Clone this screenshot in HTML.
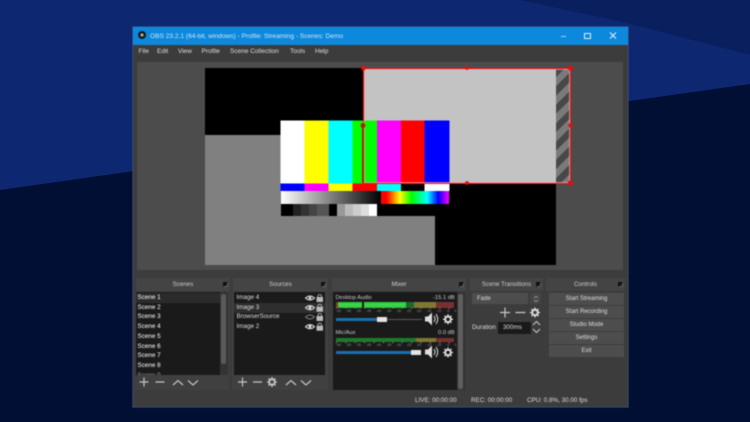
<!DOCTYPE html>
<html><head><meta charset="utf-8"><style>
html,body{margin:0;padding:0;width:750px;height:422px;overflow:hidden;background:#000f33}
*{box-sizing:border-box}
.a{position:absolute}
#bg{position:absolute;left:0;top:0}
#w{position:absolute;left:0;top:0;width:750px;height:422px;filter:blur(.45px);font-family:"Liberation Sans",sans-serif;font-size:6.5px;color:#ddd}
.t{position:absolute;white-space:nowrap;line-height:9px}
.dock{position:absolute;top:278px;height:13px;background:#444;text-align:center;line-height:13px;font-size:6.200px;color:#ccc}
.dock:after{content:"";position:absolute;right:2px;top:4px;width:5px;height:5px;background:#111;border-radius:1px;box-shadow:inset 1px 1px 0 #111,inset -1px -1px 0 #666}
.p{position:absolute;background:#404040}
.list{position:absolute;background:#1a1a1a}
.btn{position:absolute;left:549px;width:75px;height:12px;background:#4d4d4d;text-align:center;line-height:12px;font-size:6px;color:#ddd}
.s{position:absolute;left:137.5px;font-size:6.300px;line-height:9.7px;color:#ddd;white-space:nowrap}
</style></head><body>
<svg id="bg" width="750" height="422">
<rect width="750" height="422" fill="#000f33"/>
<polygon points="0,0 750,0 750,84 0,190" fill="#0e2771"/>
<polygon points="520,0 750,0 750,55 627,23" fill="#0a1f5e"/>
</svg>
<div id="w">
<div class="a" style="left:133px;top:27px;width:495px;height:380px;background:#3c3c3c;box-shadow:0 0 0 .5px #4a6a90"></div>
<div class="a" style="left:133px;top:27px;width:495px;height:18px;background:#0c88dc"></div>
<svg class="a" style="left:137px;top:30px" width="10" height="10"><circle cx="5" cy="5" r="4" fill="#1a1a1a"/><circle cx="5" cy="5" r="1.5" fill="#bbb"/></svg>
<div class="t" style="left:150px;top:32px;font-size:6.600px;color:#cfe6f8">OBS 23.2.1 (64-bit, windows) - Profile: Streaming - Scenes: Demo</div>
<div class="a" style="left:561px;top:35.5px;width:5px;height:1px;background:#9fd0f2"></div>
<div class="a" style="left:584px;top:32.5px;width:7px;height:6px;border:1px solid #e0f0fc"></div>
<svg class="a" style="left:609px;top:32px" width="8" height="7"><path d="M1 .5L7 6.5M7 .5L1 6.5" stroke="#e0f0fc" stroke-width="1.1"/></svg>
<div class="t" style="left:138.5px;top:47px">File</div>
<div class="t" style="left:157px;top:47px">Edit</div>
<div class="t" style="left:178px;top:47px">View</div>
<div class="t" style="left:201.5px;top:47px">Profile</div>
<div class="t" style="left:230px;top:47px">Scene Collection</div>
<div class="t" style="left:290px;top:47px">Tools</div>
<div class="t" style="left:315px;top:47px">Help</div>

<div class="a" style="left:137px;top:62px;width:486px;height:208px;background:#4c4c4c"></div>
<div class="a" style="left:205px;top:68px;width:158px;height:67px;background:#000"></div>
<div class="a" style="left:205px;top:135px;width:230px;height:130px;background:#808080"></div>
<div class="a" style="left:435px;top:183px;width:121px;height:82px;background:#000"></div>
<div class="a" style="left:363px;top:68px;width:193px;height:115px;background:#c3c3c3"></div>
<div class="a" style="left:556px;top:68px;width:14px;height:115px;background:repeating-linear-gradient(135deg,#484848 0 6.500px,#7a7a7a 6.500px 13px)"></div>
<div class="a" style="left:281px;top:183px;width:168px;height:33px;background:#000"></div>
<svg class="a" style="left:0;top:0" width="750" height="422" shape-rendering="crispEdges">
<rect x="280.5" y="120.5" width="24.2" height="63" fill="#fff"/>
<rect x="304.7" y="120.5" width="23.6" height="63" fill="#ff0"/>
<rect x="328.3" y="120.5" width="24.4" height="63" fill="#0ff"/>
<rect x="352.7" y="120.5" width="24.3" height="63" fill="#0f0"/>
<rect x="377" y="120.5" width="24" height="63" fill="#f0f"/>
<rect x="401" y="120.5" width="23.3" height="63" fill="#f00"/>
<rect x="424.3" y="120.5" width="25" height="63" fill="#00f"/>
<rect x="280.5" y="183.5" width="24.2" height="7.5" fill="#00f"/>
<rect x="304.7" y="183.5" width="23.6" height="7.5" fill="#f0f"/>
<rect x="328.3" y="183.5" width="24.4" height="7.5" fill="#ff0"/>
<rect x="352.7" y="183.5" width="24.3" height="7.5" fill="#f00"/>
<rect x="377" y="183.5" width="24" height="7.5" fill="#0ff"/>
<rect x="401" y="183.5" width="23.3" height="7.5" fill="#000"/>
<rect x="424.3" y="183.5" width="25" height="7.5" fill="#fff"/>
</svg>
<div class="a" style="left:280.5px;top:191px;width:100.5px;height:12.5px;background:linear-gradient(90deg,#fff,#000)"></div>
<div class="a" style="left:381px;top:191px;width:68.3px;height:12.5px;background:linear-gradient(90deg,#f00 0 8%,#ff0 28%,#0f0 45%,#0ff 68%,#00f 84%,#f0f 100%)"></div>
<div class="a" style="left:280.5px;top:203.5px;width:48px;height:12.5px;background:linear-gradient(90deg,#000 0 25%,#222 25% 42%,#333 42% 58%,#444 58% 75%,#555 75%)"></div>
<div class="a" style="left:337px;top:203.5px;width:40px;height:12.5px;background:linear-gradient(90deg,#999 0 20%,#bbb 20% 40%,#ccc 40% 60%,#ddd 60% 80%,#fff 80%)"></div>
<div class="a" style="left:362.500px;top:67.500px;width:208.500px;height:116px;border:1.500px solid #e41010;box-shadow:inset 0 0 0 .8px #ffa0a0"></div>
<div class="a" style="left:362px;top:125px;width:2px;height:58px;background:#a8200a"></div>
<svg class="a" style="left:0;top:0" width="750" height="422" fill="#dd1111">
<circle cx="363.5" cy="68" r="2.4"/><circle cx="467" cy="68" r="1.9"/><circle cx="570.5" cy="68" r="2.6"/>
<circle cx="570.5" cy="125.5" r="2.2"/><circle cx="570.5" cy="183" r="2.6"/><circle cx="467" cy="183" r="1.9"/>
<circle cx="363" cy="125.5" r="2.4" fill="#b81515"/></svg>

<div class="dock" style="left:136px;width:94px">Scenes</div>
<div class="dock" style="left:233px;width:95px">Sources</div>
<div class="dock" style="left:332px;width:134px">Mixer</div>
<div class="dock" style="left:470px;width:73px">Scene Transitions</div>
<div class="dock" style="left:546px;width:79px">Controls</div>

<div class="p" style="left:135px;top:291px;width:94px;height:99px"></div>
<div class="p" style="left:232px;top:291px;width:96px;height:99px"></div>
<div class="list" style="left:136px;top:292px;width:84px;height:82.500px"></div>
<div class="a" style="left:136px;top:293px;width:84px;height:10px;background:#2b2b2b"></div>
<div class="a" style="left:220px;top:292px;width:8px;height:83px;background:#333"></div>
<div class="a" style="left:221px;top:294px;width:5px;height:70px;background:#5a5a5a;border-radius:2px"></div>
<div class="s" style="top:293px;color:#fff">Scene 1<br>Scene 2<br>Scene 3<br>Scene 4<br>Scene 5<br>Scene 6<br>Scene 7<br>Scene 8</div>
<div class="a" style="left:137.5px;top:372px;width:80px;height:2.500px;overflow:hidden;font-size:6.300px;line-height:9px;color:#999"><div style="margin-top:-1px">Scene 9</div></div>
<svg class="a" style="left:0;top:0" width="750" height="422" fill="none" stroke="#c4c4c4" stroke-width="1.2">
<path d="M144 377.500v9M139.500 382h9M155.500 382h9M173 385l5-4.500 5 4.500M188 380.500l5 4.500 5-4.500"/>
<path d="M242.500 377.500v9M238 382h9M253 382h9M286 385l5-4.500 5 4.500M301 380.500l5 4.500 5-4.500"/>
<circle cx="272" cy="382" r="2.800" stroke-width="2"/>
<path d="M272 377v1.500M272 385.500v1.500M267 382h1.500M275.500 382h1.500M268.500 378.500l1 1M275.500 378.500l-1 1M268.500 385.500l1-1M275.500 385.500l-1-1" stroke-width="1.300"/>
</svg>

<div class="list" style="left:234px;top:292px;width:91px;height:82.500px"></div>
<div class="a" style="left:234px;top:303px;width:91px;height:9.500px;background:#2e2e2e"></div>
<div class="s" style="left:236.500px;top:293px;color:#ddd">Image 4<br>Image 3<br>BrowserSource<br>Image 2</div>
<svg class="a" style="left:0;top:0" width="750" height="422">
<g fill="none" stroke="#e0e0e0" stroke-width="1">
<path d="M305.500 298q4.500-4 9 0q-4.500 4-9 0z"/><path d="M305.500 307.700q4.500-4 9 0q-4.500 4-9 0z"/><path d="M305.500 317q4.500-4 9 0q-4.500 4-9 0z" stroke="#777"/><path d="M305.500 326.700q4.500-4 9 0q-4.500 4-9 0z"/></g>
<g fill="#e0e0e0"><circle cx="310" cy="298" r="1.400"/><circle cx="310" cy="307.700" r="1.400"/><circle cx="310" cy="326.700" r="1.400"/></g>
<g fill="#bbb"><rect x="316.500" y="297" width="6.500" height="5"/><rect x="316.500" y="306.700" width="6.500" height="5"/><rect x="316.500" y="316" width="6.500" height="5"/><rect x="316.500" y="325.700" width="6.500" height="5"/></g>
<g fill="none" stroke="#bbb" stroke-width=".8"><path d="M318 297v-1.500a2 2 0 0 1 3.500 0v1.500M318 306.700v-1.500a2 2 0 0 1 3.500 0v1.500M318 316v-1.500a2 2 0 0 1 3.500 0v1.500M318 325.700v-1.500a2 2 0 0 1 3.500 0v1.500"/></g>
</svg>

<div class="list" style="left:333px;top:292px;width:124px;height:98px"></div>
<div class="a" style="left:457px;top:292px;width:8px;height:98px;background:#333"></div>
<div class="a" style="left:458px;top:294px;width:5px;height:95px;background:#5e5e5e;border-radius:2px"></div>
<div class="t" style="left:335.500px;top:293.500px;font-size:5.600px;color:#ccc">Desktop Audio</div>
<div class="t" style="left:433px;top:293.500px;font-size:5.800px;color:#ccc">-15.1 dB</div>
<div class="a" style="left:336px;top:302px;width:1.500px;height:5.500px;background:#a03028"></div>
<div class="a" style="left:337.500px;top:302px;width:24.500px;height:5.500px;background:linear-gradient(#28c838,#40d850 50%,#28c038)"></div>
<div class="a" style="left:364px;top:302px;width:42px;height:5.500px;background:linear-gradient(#28c838,#40d850 50%,#28c038)"></div>
<div class="a" style="left:406px;top:302px;width:8px;height:5.500px;background:#1c6a28"></div>
<div class="a" style="left:414px;top:302px;width:22px;height:5.500px;background:#807830"></div>
<div class="a" style="left:436px;top:302px;width:18px;height:5.500px;background:#7a3030"></div>
<svg class="a" style="left:0;top:0" width="750" height="422"><path d="M336 308h118M336 342.500h118" stroke="#999" stroke-width="1" stroke-dasharray="1 8.400"/></svg>
<div class="t" style="left:336px;top:308.500px;font-size:3.500px;color:#888;line-height:5px;word-spacing:4px">-60 -55 -50 -45 -40 -35 -30 -25 -20 -15 -10 -5 0</div>
<div class="a" style="left:336px;top:317.500px;width:41px;height:3px;background:#1a6fb0"></div>
<div class="a" style="left:377px;top:318.500px;width:45px;height:1.500px;background:#5a5a5a"></div>
<div class="a" style="left:377px;top:317px;width:10px;height:5px;background:#e4e4e4"></div>
<div class="t" style="left:335.500px;top:329px;font-size:5.600px;color:#ccc">Mic/Aux</div>
<div class="t" style="left:438px;top:329px;font-size:5.800px;color:#ccc">0.0 dB</div>
<div class="a" style="left:336px;top:337.500px;width:80px;height:4.500px;background:#1c7a2c"></div>
<div class="a" style="left:416px;top:337.500px;width:20px;height:4.500px;background:#807830"></div>
<div class="a" style="left:436px;top:337.500px;width:18px;height:4.500px;background:#7a3030"></div>
<div class="t" style="left:336px;top:343px;font-size:3.500px;color:#888;line-height:5px;word-spacing:4px">-60 -55 -50 -45 -40 -35 -30 -25 -20 -15 -10 -5 0</div>
<div class="a" style="left:336px;top:350.500px;width:75px;height:3px;background:#1a6fb0"></div>
<div class="a" style="left:411px;top:350px;width:10px;height:5px;background:#e4e4e4"></div>
<svg class="a" style="left:0;top:0" width="750" height="422">
<path d="M425 316.500h3l4-4v13l-4-4h-3z" fill="#ddd"/><path d="M434 316q2 3 0 6M436 314q3.500 5 0 10" stroke="#ddd" fill="none"/>
<path d="M425 349.500h3l4-4v13l-4-4h-3z" fill="#ddd"/><path d="M434 349q2 3 0 6M436 347q3.500 5 0 10" stroke="#ddd" fill="none"/>
<g fill="none" stroke="#ddd"><circle cx="448" cy="319.300" r="2.800" stroke-width="2"/><path d="M448 314.300v1.500M448 322.800v1.500M443 319.300h1.500M451.500 319.300h1.500M444.500 315.800l1 1M451.500 315.800l-1 1M444.500 322.800l1-1M451.500 322.800l-1-1" stroke-width="1.300"/>
<circle cx="448" cy="352.500" r="2.800" stroke-width="2"/><path d="M448 347.500v1.500M448 356v1.500M443 352.500h1.500M451.500 352.500h1.500M444.500 349l1 1M451.500 349l-1 1M444.500 356l1-1M451.500 356l-1-1" stroke-width="1.300"/>
<circle cx="535" cy="312.500" r="2.800" stroke-width="2"/><path d="M535 307.500v1.500M535 316v1.500M530 312.500h1.500M538.500 312.500h1.500M531.500 309l1 1M538.500 309l-1 1M531.500 316l1-1M538.500 316l-1-1" stroke-width="1.300"/></g>
<g fill="none" stroke="#c8c8c8" stroke-width="1.200"><path d="M505 307.500v10M500 312.500h10M515.500 312.500h10"/>
<path d="M533 325l3.500-3.500 3.500 3.500M533 329l3.500 3.500 3.500-3.500" stroke-width="1"/></g>
</svg>
<div class="a" style="left:472px;top:293px;width:56px;height:11px;background:#4d4d4d"></div>
<div class="t" style="left:477px;top:294.500px;font-size:6px">Fade</div>
<div class="a" style="left:530px;top:293px;width:11px;height:11px;background:#454545"></div>
<svg class="a" style="left:533px;top:294.500px" width="6" height="8"><path d="M1 3l2-2 2 2M1 5l2 2 2-2" stroke="#aaa" fill="none" stroke-width=".7"/></svg>
<div class="t" style="left:472px;top:322.500px;font-size:6.300px">Duration</div>
<div class="a" style="left:498px;top:321.500px;width:33px;height:12px;background:#1a1a1a"></div>
<div class="t" style="left:503px;top:322.500px;font-size:6.300px">300ms</div>

<div class="btn" style="top:292.500px">Start Streaming</div>
<div class="btn" style="top:305.500px">Start Recording</div>
<div class="btn" style="top:318.500px">Studio Mode</div>
<div class="btn" style="top:331.500px">Settings</div>
<div class="btn" style="top:344.500px">Exit</div>

<div class="t" style="left:415px;top:396px;font-size:6.300px">LIVE: 00:00:00</div>
<div class="t" style="left:471px;top:396px;font-size:6.300px">REC: 00:00:00</div>
<div class="t" style="left:527px;top:396px;font-size:6.300px">CPU: 0.8%, 30.00 fps</div>
</div>
</body></html>
